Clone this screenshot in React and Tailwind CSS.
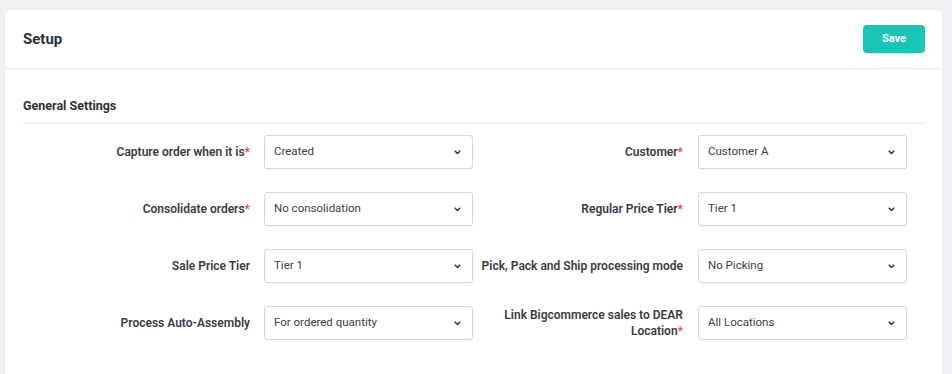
const leftFields = [
  { label: 'Capture order when it is', required: true, value: 'Created' },
  { label: 'Consolidate orders', required: true, value: 'No consolidation' },
  { label: 'Sale Price Tier', required: false, value: 'Tier 1' },
  { label: 'Process Auto-Assembly', required: false, value: 'For ordered quantity' }
];

const rightFields = [
  { label: 'Customer', required: true, value: 'Customer A' },
  { label: 'Regular Price Tier', required: true, value: 'Tier 1' },
  { label: 'Pick, Pack and Ship processing mode', required: false, value: 'No Picking' },
  { label: 'Link Bigcommerce sales to DEAR Location', required: true, value: 'All Locations' }
];

function Chevron() {
  return (
    <svg width="7" height="5" viewBox="0 0 7 5" fill="none" className="shrink-0">
      <path d="M1.2 1.2L3.5 3.5l2.3-2.3" stroke="#3a3d44" strokeWidth="1.6" strokeLinecap="round" strokeLinejoin="round" />
    </svg>
  );
}

function SelectBox({ value }) {
  return (
    <div className="w-[209px] h-[34px] shrink-0 flex items-center justify-between pl-[9px] pr-[11px] border border-[#d5d8de] rounded-[3px] bg-white shadow-[0_1px_1px_rgba(0,0,0,0.03)]">
      <span className="text-[11.5px] text-[#3b3e44]">{value}</span>
      <Chevron />
    </div>
  );
}

function Label({ field, className }) {
  return (
    <div className={`text-right text-[12px] leading-[16px] font-semibold text-[#3a3c40] ${className}`}>
      {field.label}
      {field.required && <span className="text-[#e5484d]">*</span>}
    </div>
  );
}

export default function App() {
  return (
    <div
      className="w-[952px] h-[374px] overflow-hidden bg-[#eff0f3] pt-[10px] pl-[5px]"
      style={{ fontFamily: 'Roboto, "Noto Sans", sans-serif' }}
    >
      <div className="w-[937px] h-[400px] bg-white rounded-t-[5px]">
        <div className="h-[59px] flex items-center justify-between pl-[18px] pr-[17px] border-b border-[#e6e7ea]">
          <h1 className="text-[15px] font-bold text-[#2f3136]">Setup</h1>
          <button
            type="button"
            className="w-[62px] h-[28px] rounded-[4px] bg-[#19c5b5] text-white text-[11px] font-bold"
          >
            Save
          </button>
        </div>

        <div className="px-[18px] pt-[29px]">
          <div className="pb-[9px] border-b border-[#e6e7ea]">
            <h2 className="text-[12.5px] leading-[16px] font-bold text-[#2f3136]">General Settings</h2>
          </div>

          <div className="mt-[11px] flex flex-col gap-[23px]">
            {leftFields.map((left, i) => {
              const right = rightFields[i];
              return (
                <div key={left.label} className="flex items-center">
                  <Label field={left} className="w-[227px]" />
                  <div className="ml-[14px]">
                    <SelectBox value={left.value} />
                  </div>
                  <Label field={right} className="w-[210px]" />
                  <div className="ml-[15px]">
                    <SelectBox value={right.value} />
                  </div>
                </div>
              );
            })}
          </div>
        </div>
      </div>
    </div>
  );
}
